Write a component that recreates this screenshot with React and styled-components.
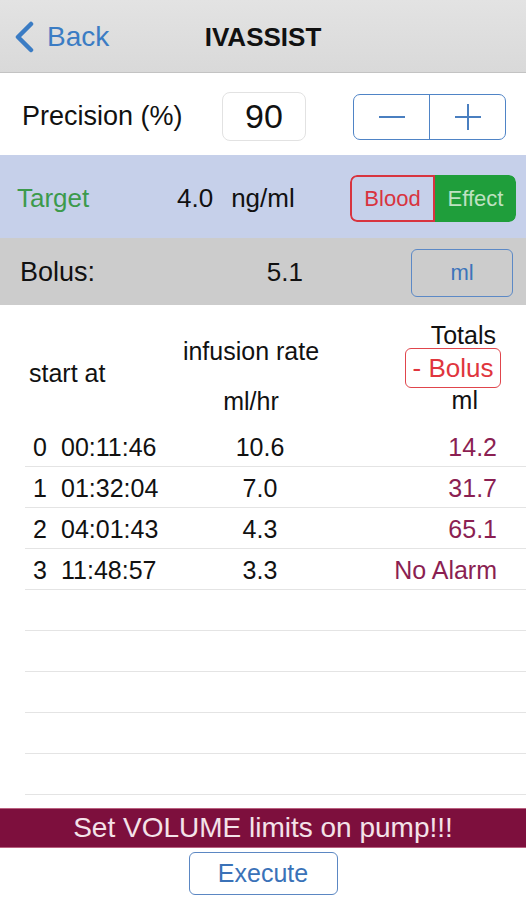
import React from 'react';
import styled, { createGlobalStyle } from 'styled-components';

const GlobalStyle = createGlobalStyle`
  html, body {
    margin: 0;
    padding: 0;
    background: #ffffff;
  }
  body {
    font-family: "Liberation Sans", Helvetica, Arial, sans-serif;
    color: #111111;
  }
`;

const Screen = styled.div`
  width: 526px;
  height: 900px;
  display: flex;
  flex-direction: column;
  overflow: hidden;
  background: #ffffff;
`;

// Navigation bar
const NavBar = styled.div`
  height: 72px;
  flex-shrink: 0;
  display: grid;
  grid-template-columns: 1fr auto 1fr;
  align-items: center;
  padding: 0 14px;
  background: linear-gradient(#e3e3e3, #d9d9d9);
  border-bottom: 1px solid #c3c3c3;
`;

const BackButton = styled.div`
  display: flex;
  align-items: center;
  gap: 13px;
  color: #3b7cc4;
  font-size: 28px;
  padding-top: 2px;
`;

const Title = styled.div`
  font-size: 26px;
  font-weight: bold;
  color: #111;
  padding-top: 2px;
`;

// Generic settings rows
const SettingRow = styled.div`
  height: ${p => p.$h}px;
  flex-shrink: 0;
  display: flex;
  align-items: center;
  box-sizing: border-box;
  padding: ${p => p.$pad};
  background: ${p => p.$bg || '#ffffff'};
`;

const Label = styled.div`
  font-size: ${p => p.$size || 27}px;
  color: ${p => p.$color || '#111'};
  width: ${p => (p.$w ? `${p.$w}px` : 'auto')};
  flex-shrink: 0;
`;

const NumberBox = styled.div`
  width: 84px;
  height: 49px;
  box-sizing: border-box;
  border: 1px solid #e2e2e2;
  border-radius: 8px;
  display: flex;
  align-items: center;
  justify-content: center;
  font-size: 34px;
  color: #111;
`;

const Stepper = styled.div`
  margin-left: auto;
  width: 153px;
  height: 46px;
  box-sizing: border-box;
  border: 1.5px solid #4f84c6;
  border-radius: 7px;
  display: flex;
`;

const StepButton = styled.div`
  flex: 1;
  display: flex;
  align-items: center;
  justify-content: center;
  & + & {
    border-left: 1.5px solid #4f84c6;
  }
`;

const Value = styled.div`
  font-size: 26px;
  color: #111;
  display: flex;
  gap: 18px;
  margin-left: ${p => (p.$push ? 'auto' : '0')};
`;

const Segment = styled.div`
  margin-left: auto;
  width: 166px;
  height: 47px;
  display: flex;
  border-radius: 7px;
  overflow: hidden;
`;

const SegmentItem = styled.div`
  flex: 1;
  display: flex;
  align-items: center;
  justify-content: center;
  box-sizing: border-box;
  font-size: 22px;
  color: ${p => (p.$active ? '#bfe2c2' : '#d8343f')};
  background: ${p => (p.$active ? '#1f9e3b' : 'transparent')};
  border: ${p => (p.$active ? 'none' : '2px solid #d8343f')};
  border-radius: ${p => (p.$active ? '0 7px 7px 0' : '7px 0 0 7px')};
`;

const OutlineButton = styled.div`
  width: ${p => p.$w}px;
  height: ${p => p.$h}px;
  box-sizing: border-box;
  display: flex;
  align-items: center;
  justify-content: center;
  border: 1.5px solid ${p => p.$color};
  border-radius: 6px;
  color: ${p => p.$text || p.$color};
  font-size: ${p => p.$size}px;
  margin-left: ${p => p.$ml || 0}px;
  margin-right: ${p => p.$mr || 0}px;
`;

// Table
const Table = styled.div`
  margin-left: 25px;
  flex-shrink: 0;
`;

const HeaderGrid = styled.div`
  height: 121px;
  display: grid;
  grid-template-columns: 150px 170px 1fr;
  padding-right: 29px;
  font-size: 25px;
  line-height: 25px;
`;

const HeaderCell = styled.div`
  display: flex;
  flex-direction: column;
  align-items: ${p => p.$align || 'flex-start'};
  padding-top: ${p => p.$top}px;
  padding-left: ${p => p.$left || 0}px;
  padding-right: ${p => p.$right || 0}px;
  gap: ${p => p.$gap || 0}px;
`;

const HeaderText = styled.div`
  margin-right: ${p => p.$mr || 0}px;
`;

const Row = styled.div`
  height: 41px;
  box-sizing: border-box;
  display: grid;
  grid-template-columns: 150px 170px 1fr;
  padding: 3px 29px 0 0;
  border-bottom: 1px solid #e4e4e4;
  font-size: 25px;
  line-height: 37px;
`;

const StartCell = styled.div`
  display: flex;
  padding-left: 8px;
`;

const Index = styled.span`
  width: 28px;
`;

const RateCell = styled.div`
  text-align: center;
`;

const TotalCell = styled.div`
  text-align: right;
  color: #8b1f52;
`;

const Spacer = styled.div`
  flex: 1;
`;

const Banner = styled.div`
  height: 40px;
  flex-shrink: 0;
  box-sizing: border-box;
  display: flex;
  align-items: center;
  justify-content: center;
  background: #7d0f3d;
  border-top: 1px solid #b9607f;
  border-bottom: 1px solid #b9607f;
  color: #f4e2e9;
  font-size: 28px;
`;

const Footer = styled.div`
  height: 52px;
  flex-shrink: 0;
  display: flex;
  justify-content: center;
  padding-top: 4px;
  box-sizing: border-box;
`;

const Chevron = () => (
  <svg width="20" height="32" viewBox="0 0 20 32">
    <polyline
      points="17,3 4,16 17,29"
      fill="none"
      stroke="#3b7cc4"
      strokeWidth="4.5"
      strokeLinecap="round"
      strokeLinejoin="round"
    />
  </svg>
);

const MinusIcon = () => (
  <svg width="26" height="26" viewBox="0 0 26 26">
    <line x1="0" y1="13" x2="26" y2="13" stroke="#4a7fc0" strokeWidth="2" />
  </svg>
);

const PlusIcon = () => (
  <svg width="26" height="26" viewBox="0 0 26 26">
    <line x1="0" y1="13" x2="26" y2="13" stroke="#4a7fc0" strokeWidth="2" />
    <line x1="13" y1="0" x2="13" y2="26" stroke="#4a7fc0" strokeWidth="2" />
  </svg>
);

const rows = [
  { idx: 0, time: '00:11:46', rate: '10.6', total: '14.2' },
  { idx: 1, time: '01:32:04', rate: '7.0', total: '31.7' },
  { idx: 2, time: '04:01:43', rate: '4.3', total: '65.1' },
  { idx: 3, time: '11:48:57', rate: '3.3', total: 'No Alarm' },
];

const emptyRows = [0, 1, 2, 3, 4];

export default function App() {
  return (
    <Screen>
      <GlobalStyle />
      <NavBar>
        <BackButton>
          <Chevron />
          <span>Back</span>
        </BackButton>
        <Title>IVASSIST</Title>
        <div />
      </NavBar>

      <SettingRow $h={82} $pad="5px 20px 0 22px">
        <Label $w={200}>Precision (%)</Label>
        <NumberBox>90</NumberBox>
        <Stepper>
          <StepButton><MinusIcon /></StepButton>
          <StepButton><PlusIcon /></StepButton>
        </Stepper>
      </SettingRow>

      <SettingRow $h={83} $bg="#c6d0ea" $pad="4px 10px 0 17px">
        <Label $w={160} $size={26} $color="#3c9a4c">Target</Label>
        <Value>
          <span>4.0</span>
          <span>ng/ml</span>
        </Value>
        <Segment>
          <SegmentItem>Blood</SegmentItem>
          <SegmentItem $active>Effect</SegmentItem>
        </Segment>
      </SettingRow>

      <SettingRow $h={67} $bg="#cccccc" $pad="2px 13px 0 20px">
        <Label>Bolus:</Label>
        <Value $push>5.1</Value>
        <OutlineButton $w={102} $h={48} $color="#5c89c6" $text="#3d74ba" $size={22} $ml={108}>
          ml
        </OutlineButton>
      </SettingRow>

      <Table>
        <HeaderGrid>
          <HeaderCell $top={56} $left={4}>start at</HeaderCell>
          <HeaderCell $top={34} $align="center" $right={18} $gap={25}>
            <HeaderText>infusion rate</HeaderText>
            <HeaderText>ml/hr</HeaderText>
          </HeaderCell>
          <HeaderCell $top={18} $align="flex-end">
            <HeaderText $mr={1}>Totals</HeaderText>
            <OutlineButton $w={96} $h={40} $color="#e0454c" $text="#e0353d" $size={26} $mr={-4}>
              - Bolus
            </OutlineButton>
            <HeaderText $mr={19}>ml</HeaderText>
          </HeaderCell>
        </HeaderGrid>

        {rows.map(r => (
          <Row key={r.idx}>
            <StartCell>
              <Index>{r.idx}</Index>
              <span>{r.time}</span>
            </StartCell>
            <RateCell>{r.rate}</RateCell>
            <TotalCell>{r.total}</TotalCell>
          </Row>
        ))}
        {emptyRows.map(i => (
          <Row key={`e${i}`} />
        ))}
      </Table>

      <Spacer />
      <Banner>Set VOLUME limits on pump!!!</Banner>
      <Footer>
        <OutlineButton $w={149} $h={43} $color="#5b87c3" $text="#3a72b8" $size={25}>
          Execute
        </OutlineButton>
      </Footer>
    </Screen>
  );
}
